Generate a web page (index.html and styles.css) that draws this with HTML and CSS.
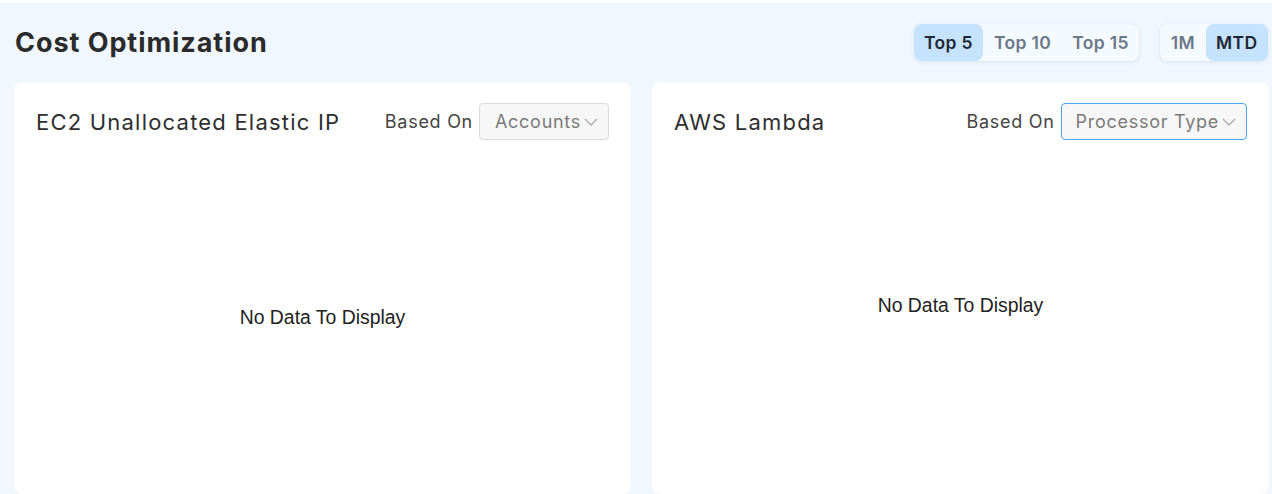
FILE: index.html
```html
<!DOCTYPE html>
<html>
<head>
<meta charset="utf-8">
<link rel="stylesheet" href="styles.css">
</head>
<body>
<div class="page">
  <div class="topbar">
    <h1 class="title">Cost Optimization</h1>
    <div class="controls">
      <div class="seg">
        <span class="seg-item active">Top 5</span>
        <span class="seg-item">Top 10</span>
        <span class="seg-item">Top 15</span>
      </div>
      <div class="seg">
        <span class="seg-item">1M</span>
        <span class="seg-item active">MTD</span>
      </div>
    </div>
  </div>
  <div class="cards">
    <div class="card">
      <div class="card-head">
        <h2 class="card-title">EC2 Unallocated Elastic IP</h2>
        <div class="based">
          <span class="based-label">Based On</span>
          <div class="select">
            <span>Accounts</span>
            <svg class="chev" width="14" height="8" viewBox="0 0 14 8"><path d="M1 1l6 6 6-6" fill="none" stroke="#aaa" stroke-width="1.3"/></svg>
          </div>
        </div>
      </div>
      <div class="card-body">No Data To Display</div>
    </div>
    <div class="card">
      <div class="card-head">
        <h2 class="card-title">AWS Lambda</h2>
        <div class="based">
          <span class="based-label">Based On</span>
          <div class="select focus">
            <span>Processor Type</span>
            <svg class="chev" width="14" height="8" viewBox="0 0 14 8"><path d="M1 1l6 6 6-6" fill="none" stroke="#aaa" stroke-width="1.3"/></svg>
          </div>
        </div>
      </div>
      <div class="card-body up">No Data To Display</div>
    </div>
  </div>
</div>
</body>
</html>
```
FILE: styles.css
```css
html, body { margin: 0; padding: 0; }
body {
  background: #ffffff;
  font-family: "Inter", "Open Sans", sans-serif;
  width: 1272px;
  height: 494px;
  overflow: hidden;
}
.page {
  margin-top: 3px;
  background: #f0f7fe;
  height: 491px;
  padding: 0 3px 0 14px;
  box-sizing: border-box;
}
.topbar {
  display: flex;
  justify-content: space-between;
  align-items: center;
  height: 79px;
  padding-right: 1px;
}
.title {
  margin: 0 0 0 1px;
  font-size: 27px;
  font-weight: 700;
  color: #2b2b2b;
  letter-spacing: 0.035em;
}
.controls {
  display: flex;
  gap: 21px;
  align-items: center;
}
.seg {
  display: flex;
  background: #f5faff;
  border-radius: 8px;
  box-shadow: 0 1px 4px rgba(40, 70, 110, 0.12);
  height: 37px;
}
.seg-item {
  display: flex;
  align-items: center;
  padding: 0 10.5px;
  font-size: 17.5px;
  font-weight: 600;
  color: #6b7888;
  border-radius: 8px;
  letter-spacing: 0.02em;
}
.seg-item.active {
  background: #c5e3fd;
  color: #1f2733;
}
.cards {
  display: flex;
  gap: 21px;
}
.card {
  flex: 1;
  background: #fff;
  border-radius: 8px;
  height: 412px;
  display: flex;
  flex-direction: column;
  box-shadow: 0 0 2px rgba(0,0,0,0.04);
}
.card-head {
  display: flex;
  justify-content: space-between;
  align-items: center;
  padding: 21px 22px 0 22px;
  height: 37px;
}
.card-title {
  margin: 0;
  font-size: 22px;
  font-weight: 400;
  color: #2e2e2e;
  letter-spacing: 0.055em;
}
.based {
  display: flex;
  align-items: center;
  gap: 6px;
}
.based-label {
  font-size: 18px;
  color: #444;
  letter-spacing: 0.04em;
}
.select {
  display: flex;
  align-items: center;
  gap: 3px;
  height: 35px;
  padding: 0 10px 0 15px;
  background: #f7f7f7;
  border: 1px solid #dcdcdc;
  border-radius: 4px;
  font-size: 18px;
  color: #7a7a7a;
  letter-spacing: 0.04em;
}
.select.focus {
  border-color: #4ea6f2;
  padding-right: 10px;
  padding-left: 14px;
}
.card-body {
  flex: 1;
  display: flex;
  align-items: center;
  justify-content: center;
  font-family: "Liberation Sans", Arial, sans-serif;
  font-size: 19.4px;
  color: #222;
}
.card-body.up {
  padding-bottom: 24px;
}
```
